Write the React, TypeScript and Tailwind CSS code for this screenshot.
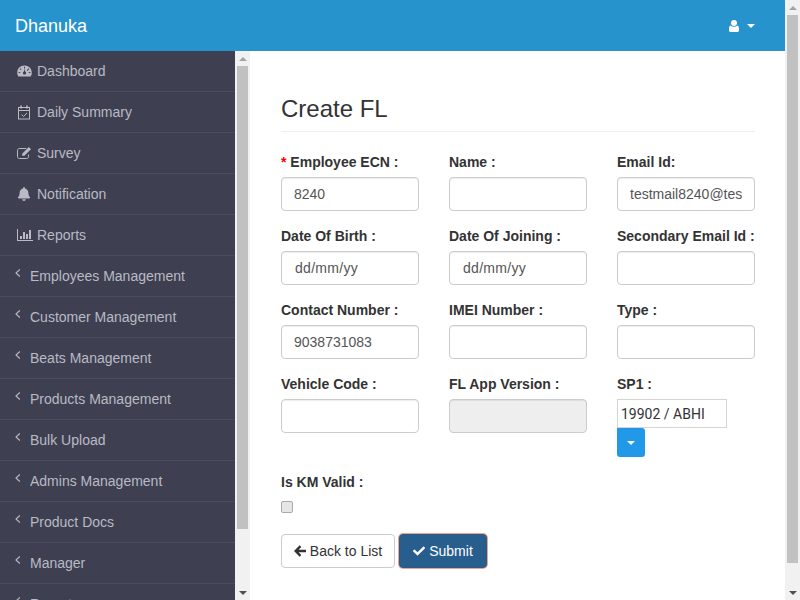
import React from "react";
import { FaBell, FaCheck } from "react-icons/fa";

const Gauge = () => (
  <svg width="15" height="12" viewBox="0 0 15 12" fill="currentColor">
    <path
      fillRule="evenodd"
      d="M7.5 0.5C3.4 0.5 0.2 3.6 0.2 7.7c0 1.4.4 2.7 1.1 3.8h12.4c.7-1.1 1.1-2.4 1.1-3.8C14.8 3.6 11.6 .5 7.5 .5zM7 1.8h1v1.6H7zM3.4 3.2l1.1 1.1-.7.7-1.1-1.1zM11.6 3.2l.7.7-1.9 2-.7-.7zM1.6 7h1.6v1H1.6zM11.8 7h1.6v1h-1.6zM7 6.5l.6-2.6h.2l.3 2.6c.6.2 1 .8 1 1.4 0 .9-.7 1.6-1.6 1.6S5.9 8.8 5.9 7.9c0-.7.4-1.2 1.1-1.4z"
    />
  </svg>
);
const Calendar = () => (
  <svg width="14" height="15" viewBox="0 0 14 15" fill="none" stroke="currentColor" strokeWidth="1">
    <rect x="1.5" y="2.5" width="11" height="11.5" />
    <path d="M1.5 5.5h11" />
    <path d="M4 0.5v3M10 0.5v3" strokeWidth="1.6" />
    <path d="M4.5 9.5l2 2 3.5-3.5" />
  </svg>
);
const EditIcon = () => (
  <svg width="15" height="12" viewBox="0 0 15 12" fill="none" stroke="currentColor">
    <path d="M11.5 7.5v2.2c0 1-.7 1.8-1.8 1.8H2.3c-1 0-1.8-.8-1.8-1.8V3.3c0-1 .8-1.8 1.8-1.8h7" />
    <path d="M5 8.7l.4-2.3L11.8 0l2.2 2.2-6.7 6.5z" fill="currentColor" stroke="none" />
  </svg>
);
const BarChart = () => (
  <svg width="16" height="12" viewBox="0 0 16 12" fill="currentColor">
    <path d="M0 0h1v11h15v1H0z" />
    <path d="M3 7h2v3H3zM6 3h2v7H6zM9 5h2v5H9zM12 1h2v9h-2z" />
  </svg>
);
const AngleLeft = () => (
  <svg width="6" height="8" viewBox="0 0 6 8" fill="none" stroke="currentColor" strokeWidth="1.1">
    <path d="M4.8 0.5L1 4l3.8 3.5" />
  </svg>
);
const UserIcon = () => (
  <svg width="10" height="12" viewBox="0 0 10 12" fill="currentColor">
    <circle cx="5" cy="3" r="3" />
    <path d="M1.6 5.4C2.4 6.2 3.6 6.8 5 6.8s2.6-.6 3.4-1.4c1 .3 1.6 1.4 1.6 3.4v1.4c0 1-.7 1.8-1.6 1.8H1.6C.7 12 0 11.2 0 10.2V8.8c0-2 .6-3.1 1.6-3.4z" />
  </svg>
);
const ArrowLeft = () => (
  <svg width="12" height="12" viewBox="0 0 12 12" fill="none" stroke="currentColor" strokeWidth="2.4">
    <path d="M6.5 1.2L1.7 6l4.8 4.8M2 6h10" />
  </svg>
);

const Caret = () => (
  <span className="inline-block w-0 h-0 border-x-[4px] border-x-transparent border-t-[4px] border-t-white" />
);

function Scrollbar({ thumb }: { thumb: number }) {
  return (
    <div className="w-[15px] shrink-0 self-stretch bg-[#f1f1f1] flex flex-col items-center" aria-hidden>
      <div className="h-[15px] w-full shrink-0 flex items-center justify-center">
        <span className="w-0 h-0 border-x-[4px] border-x-transparent border-b-[4px] border-b-[#a3a3a3]" />
      </div>
      <div className="w-[11px] shrink-0 bg-[#c1c1c1]" style={{ height: thumb }} />
      <div className="flex-1" />
      <div className="h-[15px] w-full shrink-0 flex items-center justify-center">
        <span className="w-0 h-0 border-x-[4px] border-x-transparent border-t-[4px] border-t-[#505050]" />
      </div>
    </div>
  );
}

const top = [
  { icon: <Gauge />, label: "Dashboard" },
  { icon: <Calendar />, label: "Daily Summary" },
  { icon: <EditIcon />, label: "Survey" },
  { icon: <FaBell size={14} />, label: "Notification" },
  { icon: <BarChart />, label: "Reports" },
];
const groups = [
  "Employees Management",
  "Customer Management",
  "Beats Management",
  "Products Management",
  "Bulk Upload",
  "Admins Management",
  "Product Docs",
  "Manager",
  "Reports",
];

const inputCls =
  "block w-full h-[34px] border border-[#ccc] rounded text-[14px] text-[#555] shadow-[inset_0_1px_1px_rgba(0,0,0,0.075)] outline-none";
const labelCls = "block mb-[5px] text-[14px] leading-5 font-bold text-[#333] whitespace-nowrap";

function Field({ label, value, required, disabled }: { label: string; value?: string; required?: boolean; disabled?: boolean }) {
  return (
    <div className="mb-[15px]">
      <label className={labelCls}>
        {required && <span className="text-[#f00]">* </span>}
        {label}
      </label>
      <input
        readOnly
        disabled={disabled}
        value={value ?? ""}
        className={`${inputCls} px-3 ${disabled ? "bg-[#eee]" : "bg-white"}`}
      />
    </div>
  );
}

function DateField({ label }: { label: string }) {
  return (
    <div className="mb-[15px]">
      <label className={labelCls}>{label}</label>
      <input readOnly value="dd/mm/yyyy" className={`${inputCls} bg-white pl-[13px] pr-[60px] tracking-[0.3px]`} />
    </div>
  );
}

export default function App() {
  return (
    <div className="h-screen overflow-hidden flex bg-white font-['Liberation_Sans',Arial,sans-serif]">
      <div className="flex-1 min-w-0 flex flex-col">
        <header className="h-[51px] shrink-0 bg-[#2793cc] flex items-center justify-between pl-[15px] pr-[30px] text-white">
          <span className="text-[18px] leading-5">Dhanuka</span>
          <span className="flex items-center gap-[8px]">
            <UserIcon />
            <Caret />
          </span>
        </header>
        <div className="flex-1 min-h-0 flex">
          <nav className="w-[235px] shrink-0 overflow-hidden bg-[#3e4052] text-[14px] text-[#b9bac3]">
            {top.map((it) => (
              <div key={it.label} className="h-[41px] border-b border-[#4b4d5f] flex items-center pl-[17px]">
                <span className="w-[20px] shrink-0 flex items-center">{it.icon}</span>
                <span>{it.label}</span>
              </div>
            ))}
            {groups.map((g) => (
              <div key={g} className="h-[41px] border-b border-[#4b4d5f] flex items-center pl-[15px]">
                <span className="w-[15px] shrink-0 -mt-[7px] flex">
                  <AngleLeft />
                </span>
                <span>{g}</span>
              </div>
            ))}
          </nav>
          <Scrollbar thumb={463} />
          <main className="flex-1 min-w-0 pl-[31px] pr-[30px]">
            <h1 className="mt-[44px] h-[37px] border-b border-[#eee] text-[24px] leading-[28px] text-[#333] font-normal">Create FL</h1>
            <form className="mt-[20px]">
              <div className="grid grid-cols-3 gap-x-[30px]">
                <Field label="Employee ECN :" value="8240" required />
                <Field label="Name :" />
                <Field label="Email Id:" value="testmail8240@testmail.com" />
                <DateField label="Date Of Birth :" />
                <DateField label="Date Of Joining :" />
                <Field label="Secondary Email Id :" />
                <Field label="Contact Number :" value="9038731083" />
                <Field label="IMEI Number :" />
                <Field label="Type :" />
                <Field label="Vehicle Code :" />
                <Field label="FL App Version :" disabled />
                <div className="mb-[15px]">
                  <label className={labelCls}>SP1 :</label>
                  <input
                    readOnly
                    value="19902 / ABHI"
                    className="block w-[110px] h-[29px] border border-[#d5d5d5] px-[3px] text-[14px] text-[#333] font-['Roboto',sans-serif] outline-none"
                  />
                  <button type="button" className="flex items-center justify-center w-[28px] h-[29px] bg-[#2299e8] rounded-b-[3px] rounded-tr-[3px]">
                    <Caret />
                  </button>
                </div>
              </div>
              <label className={labelCls}>Is KM Valid :</label>
              <input
                type="checkbox"
                disabled
                className="block appearance-none mt-[9px] ml-0 w-[12px] h-[12px] border border-[#a9a9a9] rounded-[2px] bg-[#e6e6e6]"
              />
              <div className="mt-[21px] flex items-center gap-[4px]">
                <button type="button" className="h-[34px] w-[114px] flex items-center justify-center gap-[4px] border border-[#ccc] rounded bg-white text-[14px] text-[#333]">
                  <ArrowLeft />
                  Back to List
                </button>
                <button type="button" className="h-[34px] w-[88px] flex items-center justify-center gap-[4px] border border-[#2a5a85] rounded bg-[#285e8e] text-[14px] text-white shadow-[0_0_0_1px_#eda58f]">
                  <FaCheck size={12} />
                  Submit
                </button>
              </div>
            </form>
          </main>
        </div>
      </div>
      <Scrollbar thumb={548} />
    </div>
  );
}
